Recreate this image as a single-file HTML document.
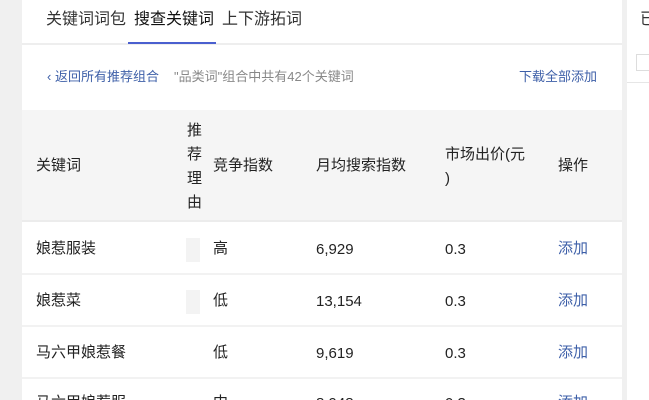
<!DOCTYPE html><html><head><meta charset="utf-8"><style>
*{margin:0;padding:0;box-sizing:border-box}
html,body{width:649px;height:400px;overflow:hidden}
body{background:#f0f0f0;font-family:"Liberation Sans","Noto Sans CJK SC",sans-serif;color:#333;position:relative}
.a{position:absolute;white-space:nowrap;line-height:20px}
.main{position:absolute;left:22px;top:0;width:600px;height:400px;background:#fff}
.rp{position:absolute;left:627px;top:0;width:22px;height:400px;background:#fff}
.t{font-size:15px;color:#222}
.n{font-size:15px;color:#222;padding-top:3px}
.blue{color:#3d5fa8}
.row{position:absolute;left:22px;width:600px;height:52px;border-bottom:2px solid #f2f2f2;background:#fff}
.clip{position:absolute;left:0;top:390px;width:649px;height:10px;overflow:hidden}
</style></head><body>
<div class="main"></div>
<div class="rp"></div>
<div class="a" style="left:640px;top:10px;font-size:16px">已</div>
<div class="a" style="left:636px;top:54px;width:20px;height:17px;border:1px solid #ddd;border-right:none"></div>
<div class="a" style="left:627px;top:82px;width:22px;height:1px;background:#e6e6e6"></div>
<div class="a" style="left:22px;top:43px;width:600px;height:2px;background:#eee"></div>
<div class="a" style="left:46px;top:10px;font-size:16px;color:#333">关键词词包</div>
<div class="a" style="left:134px;top:10px;font-size:16px;color:#111">搜查关键词</div>
<div class="a" style="left:222px;top:10px;font-size:16px;color:#333">上下游拓词</div>
<div class="a" style="left:128px;top:42px;width:88px;height:2px;background:#4a5fcf"></div>
<div class="a blue" style="left:47px;top:67px;font-size:13px">‹ 返回所有推荐组合</div>
<div class="a" style="left:174px;top:67px;font-size:13px;color:#888">"品类词"组合中共有42个关键词</div>
<div class="a blue" style="left:519px;top:67px;font-size:13px">下载全部添加</div>
<div class="a" style="left:22px;top:110px;width:600px;height:112px;background:#f5f5f5;border-bottom:2px solid #ececec"></div>
<div class="a t" style="left:36px;top:156px">关键词</div>
<div class="a" style="left:187px;top:119px;font-size:15px;line-height:24px;white-space:normal;width:16px;color:#222">推荐理由</div>
<div class="a t" style="left:213px;top:156px">竞争指数</div>
<div class="a t" style="left:316px;top:156px">月均搜索指数</div>
<div class="a t" style="left:445px;top:143px;line-height:24px">市场出价(元<br>)</div>
<div class="a t" style="left:558px;top:156px">操作</div>
<div class="row" style="top:223px"></div><div class="row" style="top:275px"></div><div class="row" style="top:327px"></div>
<div class="a" style="left:186px;top:238px;width:14px;height:24px;background:#f3f3f3"></div>
<div class="a" style="left:186px;top:290px;width:14px;height:24px;background:#f3f3f3"></div>
<div class="a t" style="left:36px;top:239px">娘惹服装</div><div class="a t" style="left:213px;top:239px">高</div><div class="a n" style="left:316px;top:237px">6,929</div><div class="a n" style="left:445px;top:237px">0.3</div><div class="a t" style="left:558px;top:239px;color:#3d5fa8">添加</div>
<div class="a t" style="left:36px;top:291px">娘惹菜</div><div class="a t" style="left:213px;top:291px">低</div><div class="a n" style="left:316px;top:289px">13,154</div><div class="a n" style="left:445px;top:289px">0.3</div><div class="a t" style="left:558px;top:291px;color:#3d5fa8">添加</div>
<div class="a t" style="left:36px;top:343px">马六甲娘惹餐</div><div class="a t" style="left:213px;top:343px">低</div><div class="a n" style="left:316px;top:341px">9,619</div><div class="a n" style="left:445px;top:341px">0.3</div><div class="a t" style="left:558px;top:343px;color:#3d5fa8">添加</div>
<div class="clip">
<div class="a t" style="left:36px;top:3px">马六甲娘惹服</div><div class="a t" style="left:213px;top:3px">中</div><div class="a n" style="left:316px;top:1px">8,948</div><div class="a n" style="left:445px;top:1px">0.3</div><div class="a t" style="left:558px;top:3px;color:#3d5fa8">添加</div>
</div>
</body></html>
